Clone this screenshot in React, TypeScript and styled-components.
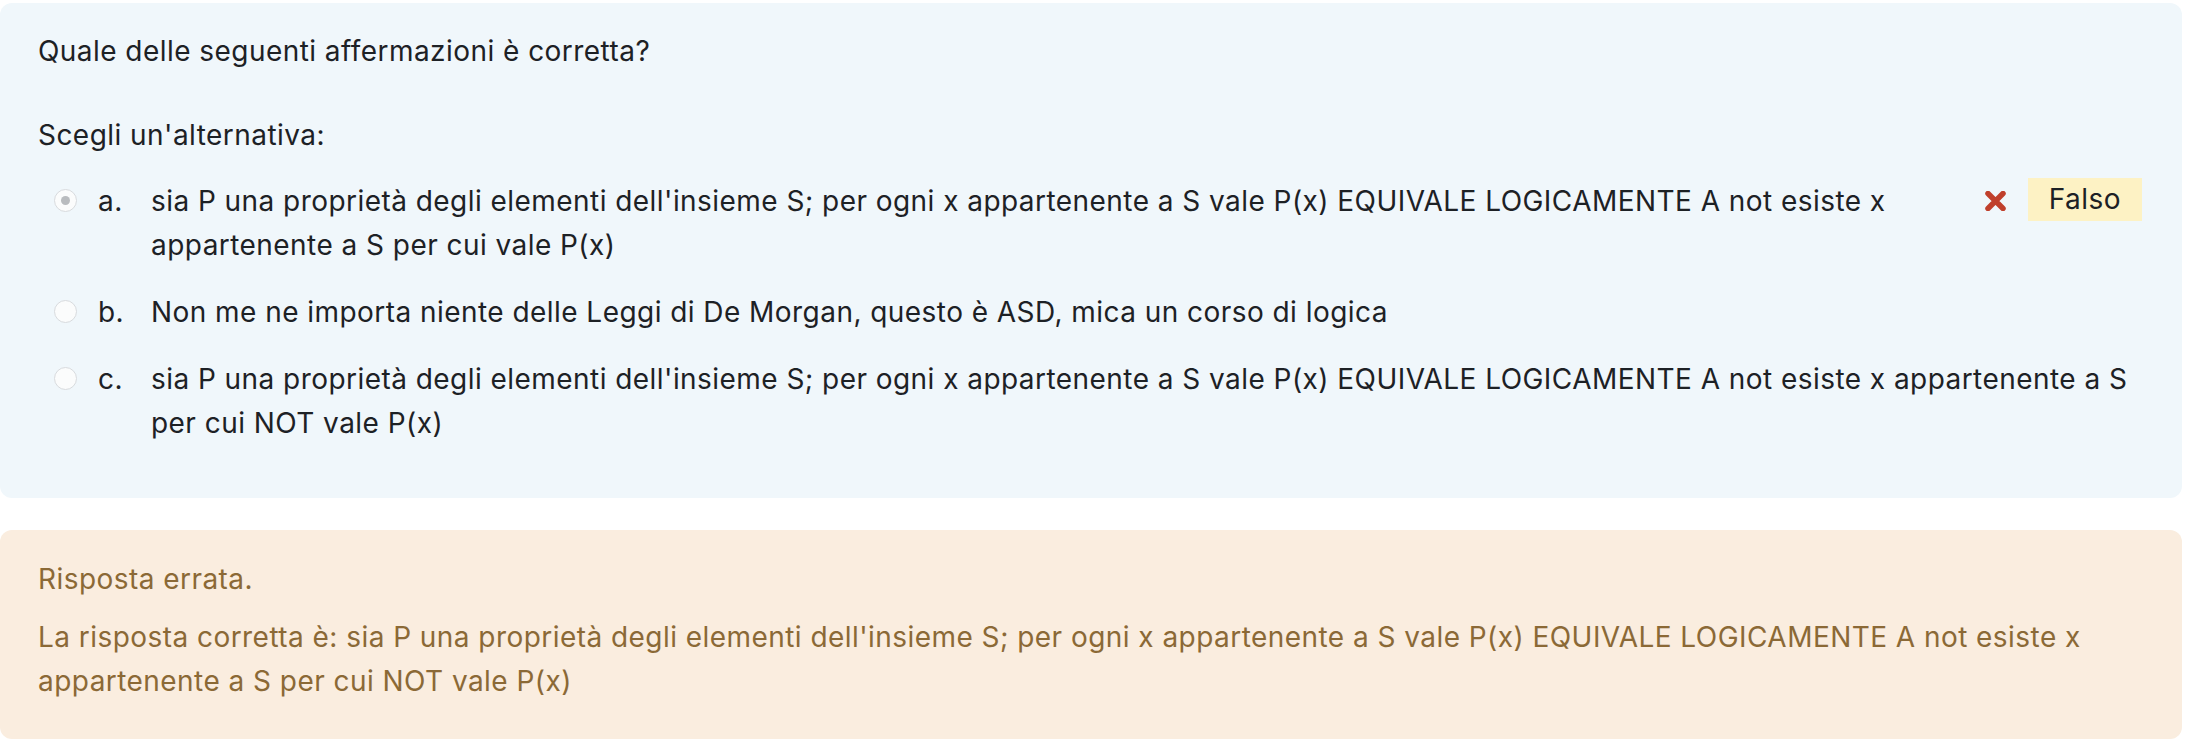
import React from "react";
import styled, { createGlobalStyle } from "styled-components";

const GlobalStyle = createGlobalStyle`
  html, body {
    margin: 0;
    padding: 0;
    background: #ffffff;
  }
  body {
    font-family: "Inter", "Noto Sans", "Liberation Sans", sans-serif;
    color: #1d2125;
  }
`;

const Page = styled.div`
  width: 2182px;
  padding-top: 3px;
  display: flex;
  flex-direction: column;
  gap: 32px;
  font-size: 28px;
  letter-spacing: 0.45px;
  line-height: 44px;
`;

const QuestionCard = styled.section`
  background: #f0f7fb;
  border-radius: 12px;
  padding: 26px 40px 53px 38px;
  color: #1d2125;
`;

const QuestionText = styled.p`
  margin: 0 0 40px;
`;

const Prompt = styled.div`
  margin-bottom: 22px;
`;

const AnswerList = styled.div`
  display: flex;
  flex-direction: column;
  gap: 23px;
`;

const AnswerRow = styled.div`
  display: flex;
  align-items: flex-start;
`;

const Radio = styled.span<{ $checked?: boolean }>`
  flex: none;
  box-sizing: border-box;
  width: 23px;
  height: 23px;
  margin: 10px 21px 0 16px;
  border-radius: 50%;
  border: 1.5px solid #d8dbde;
  background: #fbfcfc;
  display: flex;
  align-items: center;
  justify-content: center;
  &::after {
    content: "";
    display: ${(p) => (p.$checked ? "block" : "none")};
    width: 9px;
    height: 9px;
    border-radius: 50%;
    background: #b9bcbf;
  }
`;

const Letter = styled.span`
  flex: none;
  width: 53px;
`;

const AnswerText = styled.span`
  flex: 1;
  min-width: 0;
`;

const FeedbackIcon = styled.svg`
  flex: none;
  width: 21px;
  height: 20px;
  margin: 12px 22px 0 40px;
`;

const Badge = styled.span`
  flex: none;
  background: #fdf2c4;
  padding: 0 21px;
  line-height: 43px;
  margin-top: -1px;
`;

const OutcomeCard = styled.section`
  background: #faeddf;
  color: #8b6936;
  border-radius: 12px;
  padding: 27px 40px 36px 38px;
`;

const OutcomeLine = styled.p`
  margin: 0 0 14px;
  &:last-child {
    margin-bottom: 0;
  }
`;

const CrossIcon = () => (
  <FeedbackIcon viewBox="0 0 21 20" aria-hidden="true">
    <path
      d="M3 2.5 L18 17.5 M18 2.5 L3 17.5"
      stroke="#c0402c"
      strokeWidth="5.5"
      strokeLinecap="round"
      fill="none"
    />
  </FeedbackIcon>
);

type Answer = {
  letter: string;
  text: string;
  checked?: boolean;
  feedback?: string;
};

const answers: Answer[] = [
  {
    letter: "a.",
    text:
      "sia P una proprietà degli elementi dell'insieme S; per ogni x appartenente a S vale P(x) EQUIVALE LOGICAMENTE A not esiste x appartenente a S per cui vale P(x)",
    checked: true,
    feedback: "Falso",
  },
  {
    letter: "b.",
    text:
      "Non me ne importa niente delle Leggi di De Morgan, questo è ASD, mica un corso di logica",
  },
  {
    letter: "c.",
    text:
      "sia P una proprietà degli elementi dell'insieme S; per ogni x appartenente a S vale P(x) EQUIVALE LOGICAMENTE A not esiste x appartenente a S per cui NOT vale P(x)",
  },
];

export default function App() {
  return (
    <>
      <GlobalStyle />
      <Page>
        <QuestionCard>
          <QuestionText>Quale delle seguenti affermazioni è corretta?</QuestionText>
          <Prompt>Scegli un'alternativa:</Prompt>
          <AnswerList>
            {answers.map((a) => (
              <AnswerRow key={a.letter}>
                <Radio $checked={a.checked} />
                <Letter>{a.letter}</Letter>
                <AnswerText>{a.text}</AnswerText>
                {a.feedback && (
                  <>
                    <CrossIcon />
                    <Badge>{a.feedback}</Badge>
                  </>
                )}
              </AnswerRow>
            ))}
          </AnswerList>
        </QuestionCard>
        <OutcomeCard>
          <OutcomeLine>Risposta errata.</OutcomeLine>
          <OutcomeLine>
            La risposta corretta è: sia P una proprietà degli elementi dell'insieme S; per ogni x
            appartenente a S vale P(x) EQUIVALE LOGICAMENTE A not esiste x appartenente a S per cui
            NOT vale P(x)
          </OutcomeLine>
        </OutcomeCard>
      </Page>
    </>
  );
}
